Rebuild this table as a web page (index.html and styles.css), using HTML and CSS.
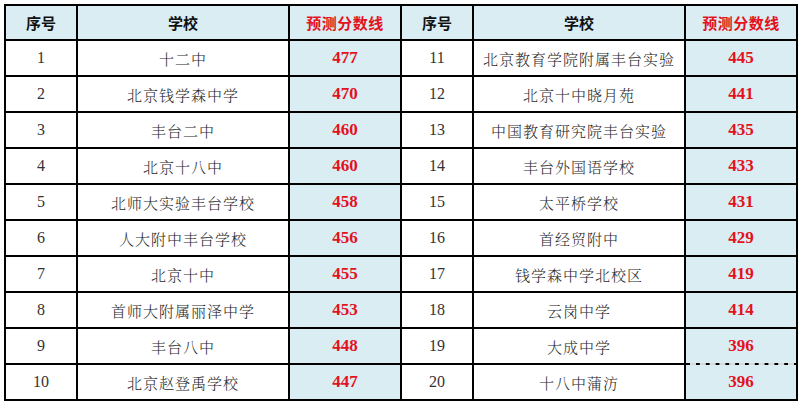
FILE: index.html
```html
<!DOCTYPE html>
<html lang="zh">
<head>
<meta charset="utf-8">
<title>预测分数线</title>
<link rel="stylesheet" href="styles.css">
</head>
<body>
<div class="wrap">
<table class="scores">
  <colgroup>
    <col class="c-no"><col class="c-name"><col class="c-score">
    <col class="c-no"><col class="c-name"><col class="c-score">
  </colgroup>
  <thead>
    <tr>
      <th>序号</th><th>学校</th><th class="red">预测分数线</th>
      <th>序号</th><th>学校</th><th class="red">预测分数线</th>
    </tr>
  </thead>
  <tbody>
    <tr><td class="no">1</td><td class="name">十二中</td><td class="score">477</td><td class="no">11</td><td class="name">北京教育学院附属丰台实验</td><td class="score">445</td></tr>
    <tr><td class="no">2</td><td class="name">北京钱学森中学</td><td class="score">470</td><td class="no">12</td><td class="name">北京十中晓月苑</td><td class="score">441</td></tr>
    <tr><td class="no">3</td><td class="name">丰台二中</td><td class="score">460</td><td class="no">13</td><td class="name">中国教育研究院丰台实验</td><td class="score">435</td></tr>
    <tr><td class="no">4</td><td class="name">北京十八中</td><td class="score">460</td><td class="no">14</td><td class="name">丰台外国语学校</td><td class="score">433</td></tr>
    <tr><td class="no">5</td><td class="name">北师大实验丰台学校</td><td class="score">458</td><td class="no">15</td><td class="name">太平桥学校</td><td class="score">431</td></tr>
    <tr><td class="no">6</td><td class="name">人大附中丰台学校</td><td class="score">456</td><td class="no">16</td><td class="name">首经贸附中</td><td class="score">429</td></tr>
    <tr><td class="no">7</td><td class="name">北京十中</td><td class="score">455</td><td class="no">17</td><td class="name">钱学森中学北校区</td><td class="score">419</td></tr>
    <tr><td class="no">8</td><td class="name">首师大附属丽泽中学</td><td class="score">453</td><td class="no">18</td><td class="name">云岗中学</td><td class="score">414</td></tr>
    <tr><td class="no">9</td><td class="name">丰台八中</td><td class="score">448</td><td class="no">19</td><td class="name">大成中学</td><td class="score">396</td></tr>
    <tr><td class="no">10</td><td class="name">北京赵登禹学校</td><td class="score">447</td><td class="no">20</td><td class="name">十八中蒲汸</td><td class="score">396</td></tr>
  </tbody>
</table>
<div class="mark"></div>
</div>
</body>
</html>
```
FILE: styles.css
```css
html, body {
  margin: 0;
  padding: 0;
  background: #ffffff;
}
.wrap {
  position: relative;
  padding: 4px 0 0 4px;
}
.scores {
  border-collapse: collapse;
  table-layout: fixed;
  width: 794px;
  border: 2px solid #000;
}
.c-no { width: 72px; }
.c-name { width: 212px; }
.c-score { width: 112px; }
.scores th, .scores td {
  border: 2px solid #000;
  padding: 0;
  text-align: center;
  vertical-align: middle;
  overflow: hidden;
  white-space: nowrap;
}
.scores th {
  height: 33px;
  background: #daedf3;
  font-family: "Noto Sans CJK SC", sans-serif;
  font-weight: 700;
  font-size: 15px;
  color: #111;
}
.scores th.red {
  color: #e3121c;
  letter-spacing: 0.5px;
}
.scores td {
  height: 34px;
}
.no {
  font-family: "Liberation Serif", serif;
  font-size: 16px;
  color: #333;
}
.name {
  font-family: "Noto Serif CJK SC", "Noto Sans CJK SC", sans-serif;
  font-weight: 300;
  font-size: 15px;
  letter-spacing: 1px;
  color: #2a2a2a;
}
.score {
  background: #daedf3;
  font-family: "Liberation Serif", serif;
  font-weight: 700;
  font-size: 17px;
  color: #e3121c;
}
.mark {
  position: absolute;
  left: 690px;
  top: 363px;
  width: 104px;
  height: 0;
  border-top: 2px dashed rgba(255,255,255,0.85);
}
```
